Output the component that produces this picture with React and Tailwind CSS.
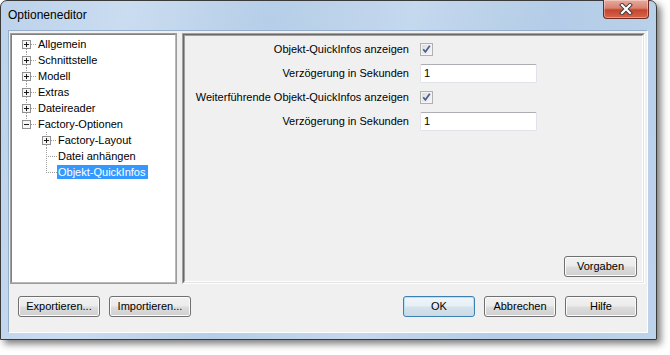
import React from "react";

function TreeCol({ box, top, bottom }) {
  return (
    <svg width="20" height="16" className="shrink-0 block" shapeRendering="crispEdges">
      {box ? (
        <>
          {top && <path d="M9.5 0V4" stroke="#a0a0a0" strokeDasharray="1 1" />}
          {bottom && <path d="M9.5 13V16" stroke="#a0a0a0" strokeDasharray="1 1" />}
          <path d="M14 8.5H20" stroke="#a0a0a0" strokeDasharray="1 1" />
          <rect x="5.5" y="4.5" width="8" height="8" fill="#f6f6f6" stroke="#919191" />
          <path d="M7 8.5H12" stroke="#1a1a1a" />
          {box === "plus" && <path d="M9.5 6V11" stroke="#1a1a1a" />}
        </>
      ) : top ? (
        <>
          <path d={bottom ? "M9.5 0V16" : "M9.5 0V9"} stroke="#a0a0a0" strokeDasharray="1 1" />
          <path d="M11 8.5H20" stroke="#a0a0a0" strokeDasharray="1 1" />
        </>
      ) : null}
    </svg>
  );
}

function TreeRow({ cols, label, selected }) {
  return (
    <div className="flex h-[16px] items-center">
      {cols.map((c, i) => (
        <TreeCol key={i} {...c} />
      ))}
      <span
        className={
          "h-[14px] leading-[14px] pl-[1px] pr-[3px] whitespace-nowrap " +
          (selected ? "bg-[#3399ff] text-white" : "text-black")
        }
      >
        {label}
      </span>
    </div>
  );
}

function Btn({ children, className = "", def = false }) {
  return (
    <div
      className={
        "h-[21px] rounded-[3px] border flex items-center justify-center text-[11px] text-black " +
        (def
          ? "border-[#3c7fb1] shadow-[inset_0_0_0_1px_#b6e2f8] bg-[linear-gradient(#f0f6fa_0%,#e6eff5_48%,#d6e3ec_52%,#cad9e4_100%)] "
          : "border-[#707070] shadow-[inset_0_0_0_1px_#fbfbfb] bg-[linear-gradient(#f2f2f2_0%,#ebebeb_48%,#dddddd_52%,#cfcfcf_100%)] ") +
        className
      }
    >
      {children}
    </div>
  );
}

function Check() {
  return (
    <svg width="13" height="13" className="block" shapeRendering="geometricPrecision">
      <defs>
        <linearGradient id="cbg" x1="0" y1="0" x2="1" y2="1">
          <stop offset="0" stopColor="#dcdcdc" />
          <stop offset="1" stopColor="#f6f6f6" />
        </linearGradient>
      </defs>
      <rect x="0.5" y="0.5" width="12" height="12" fill="#f4f4f4" stroke="#b1b1b1" />
      <rect x="2" y="2" width="9" height="9" fill="url(#cbg)" />
      <path d="M3.2 6.2 L5.4 8.8 L9.8 2.8" fill="none" stroke="#4a5e96" strokeWidth="1.7" />
    </svg>
  );
}

function Input() {
  return (
    <div className="w-[117px] h-[19px] bg-white border border-[#e2e3ea] border-t-[#abadb3] rounded-[2px] flex items-center pl-[3px] text-[11px] text-black">
      1
    </div>
  );
}

export default function App() {
  return (
    <div className="w-[670px] h-[355px] bg-white font-['Liberation_Sans',Arial,sans-serif] text-[11px] overflow-hidden">
      <div className="w-[657px] h-[340px] rounded-t-[7px] border border-[#3a3a3a] shadow-[4px_4px_7px_rgba(0,0,0,0.5)] bg-[linear-gradient(100deg,#bcd3eb_0%,#cadcf0_18%,#b6cee8_38%,#c4d8ee_58%,#b4cce7_78%,#bdd3eb_100%)] flex flex-col">
        {/* Title bar */}
        <div className="h-[29px] flex items-start justify-between shrink-0">
          <div className="pl-[7px] pt-[7px] text-[12px] leading-[15px] text-black">Optioneneditor</div>
          <div className="-mt-px mr-[7px] w-[46px] h-[19px] rounded-b-[4px] border border-t-0 border-[#6e2a22] bg-[linear-gradient(#e9a99c_0%,#d88271_45%,#c5452e_55%,#d5664a_100%)] shadow-[inset_0_0_0_1px_rgba(255,255,255,0.35)] flex items-center justify-center">
            <svg width="14" height="12" viewBox="0 0 14 12">
              <path d="M3 2 L11 10 M11 2 L3 10" stroke="#3a3a3a" strokeWidth="4" strokeLinecap="square" />
              <path d="M3 2 L11 10 M11 2 L3 10" stroke="#ffffff" strokeWidth="2.2" strokeLinecap="square" />
            </svg>
          </div>
        </div>
        {/* Frame body */}
        <div className="flex-1 px-[7px] pb-[6px] pr-[8px] flex">
          <div className="w-[640px] h-[303px] bg-[#f0f0f0] border border-[#96aecb] border-b-white border-r-white flex flex-col">
            <div className="flex pt-[2px] pl-[1px] gap-[5px] h-[253px]">
              {/* Tree */}
              <div className="w-[167px] h-[251px] border border-[#9c9c9c] bg-white">
                <div className="w-full h-full border border-[#b8b8b8] border-t-[#828282] border-l-[#828282] pt-[1px] pl-[5px]">
                  <TreeRow cols={[{ box: "plus", bottom: true }]} label="Allgemein" />
                  <TreeRow cols={[{ box: "plus", top: true, bottom: true }]} label="Schnittstelle" />
                  <TreeRow cols={[{ box: "plus", top: true, bottom: true }]} label="Modell" />
                  <TreeRow cols={[{ box: "plus", top: true, bottom: true }]} label="Extras" />
                  <TreeRow cols={[{ box: "plus", top: true, bottom: true }]} label="Dateireader" />
                  <TreeRow cols={[{ box: "minus", top: true }]} label="Factory-Optionen" />
                  <TreeRow cols={[{}, { box: "plus", top: true, bottom: true }]} label="Factory-Layout" />
                  <TreeRow cols={[{}, { top: true, bottom: true }]} label="Datei anhängen" />
                  <TreeRow cols={[{}, { top: true }]} label="Objekt-QuickInfos" selected />
                </div>
              </div>
              {/* Right panel */}
              <div className="w-[463px] h-[251px] border border-[#a0a0a0] border-b-white border-r-white">
                <div className="w-full h-full border border-[#696969] border-b-[#e3e3e3] border-r-[#e3e3e3]">
                  <div className="w-full h-full border border-[#a0a0a0] border-b-[#ffffff] border-r-[#ffffff] flex flex-col bg-[#f0f0f0]">
                    <div className="grid grid-cols-[223px_auto] auto-rows-[24px] gap-x-[11px] items-center pt-[1px] pl-[1px]">
                      <div className="text-right text-black">Objekt-QuickInfos anzeigen</div>
                      <div><Check /></div>
                      <div className="text-right text-black">Verzögerung in Sekunden</div>
                      <div><Input /></div>
                      <div className="text-right text-black whitespace-nowrap">Weiterführende Objekt-QuickInfos anzeigen</div>
                      <div><Check /></div>
                      <div className="text-right text-black">Verzögerung in Sekunden</div>
                      <div><Input /></div>
                    </div>
                    <div className="flex-1" />
                    <div className="flex justify-end pr-[5px] pb-[4px]">
                      <Btn className="w-[73px]">Vorgaben</Btn>
                    </div>
                  </div>
                </div>
              </div>
            </div>
            {/* Bottom buttons */}
            <div className="flex justify-between pt-[12px] pl-[9px] pr-[10px]">
              <div className="flex gap-[9px]">
                <Btn className="w-[82px]">Exportieren...</Btn>
                <Btn className="w-[82px]">Importieren...</Btn>
              </div>
              <div className="flex gap-[9px]">
                <Btn className="w-[72px]" def>OK</Btn>
                <Btn className="w-[72px]">Abbrechen</Btn>
                <Btn className="w-[72px]">Hilfe</Btn>
              </div>
            </div>
          </div>
        </div>
      </div>
    </div>
  );
}
